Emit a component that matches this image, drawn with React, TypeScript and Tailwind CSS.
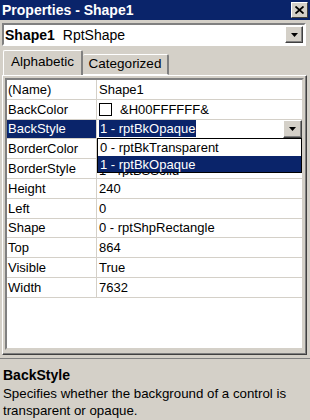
const ROWS = [
  { name: '(Name)', value: 'Shape1' },
  { name: 'BackColor', value: '&H00FFFFFF&', swatch: true },
  { name: 'BackStyle', value: '1 - rptBkOpaque', selected: true },
  { name: 'BorderColor', value: '' },
  { name: 'BorderStyle', value: '1 - rptBSSolid', hidden: true },
  { name: 'Height', value: '240' },
  { name: 'Left', value: '0' },
  { name: 'Shape', value: '0 - rptShpRectangle' },
  { name: 'Top', value: '864' },
  { name: 'Visible', value: 'True' },
  { name: 'Width', value: '7632' },
]

function DownArrow() {
  return (
    <svg width="7" height="4" viewBox="0 0 7 4">
      <path d="M0 0h7L3.5 4z" fill="#000" />
    </svg>
  )
}

function DropButton({ className = '' }: { className?: string }) {
  return (
    <div className={`flex items-center justify-center bg-[#d4d0c8] border border-t-white border-l-white border-r-[#404040] border-b-[#404040] shadow-[inset_-1px_-1px_0_#808080] ${className}`}>
      <DownArrow />
    </div>
  )
}

export default function App() {
  return (
    <div className="w-[310px] h-[420px] bg-[#d4d0c8] flex flex-col overflow-hidden font-['Liberation_Sans',Arial,sans-serif] text-black select-none">
      {/* Title bar */}
      <div className="h-[20px] bg-[#0a246a] flex items-center justify-between pl-[2px] pr-[2px]">
        <span className="text-white font-bold text-[14px] leading-none">Properties - Shape1</span>
        <div className="w-[17px] h-[16px] bg-[#d4d0c8] border border-t-white border-l-white border-r-[#404040] border-b-[#404040] flex items-center justify-center">
          <svg width="9" height="8" viewBox="0 0 9 8">
            <path d="M0.5 0.5l8 7M8.5 0.5l-8 7" stroke="#000" strokeWidth="1.8" />
          </svg>
        </div>
      </div>

      {/* Object combo */}
      <div className="mt-[3px] ml-[2px] mr-[4px] h-[23px] bg-white border-2 border-t-[#808080] border-l-[#808080] border-r-white border-b-white flex items-center">
        <div className="flex-1 pl-[1px] text-[14px] leading-none">
          <span className="font-bold">Shape1</span>
          <span className="ml-[8px]">RptShape</span>
        </div>
        <DropButton className="w-[18px] h-[17px] mr-[1px]" />
      </div>

      {/* Tabs */}
      <div className="mt-[4px] h-[25px] flex items-end pl-[3px] relative z-[1]">
        <div className="w-[80px] h-[25px] bg-[#d4d0c8] border-t border-l border-t-white border-l-white border-r-2 border-r-[#808080] rounded-t-[2px] flex items-center justify-center text-[13.5px] pb-[1px]">
          Alphabetic
        </div>
        <div className="w-[86px] h-[21px] bg-[#d4d0c8] border-t border-t-white border-r-2 border-r-[#808080] rounded-t-[2px] flex items-center justify-center text-[13.5px] border-b border-b-white">
          Categorized
        </div>
      </div>

      {/* Tab page */}
      <div className="ml-[2px] mr-[3px] h-[280px] border border-t-white border-l-white border-r-[#404040] border-b-[#404040] shadow-[inset_-1px_-1px_0_#808080] pt-[2px] pl-[2px] pr-[2px] pb-[4px] flex">
        <div className="flex-1 bg-white border-2 border-t-[#808080] border-l-[#808080] border-r-[#d4d0c8] border-b-[#d4d0c8] relative">
          {ROWS.map(row => (
            <div key={row.name} className="h-[19.8px] flex border-b border-b-[#d4d0c8] text-[13px] leading-none">
              <div className={`w-[90px] pl-[1px] flex items-center border-r border-r-[#d4d0c8] ${row.selected ? 'bg-[#0a246a] text-white' : ''}`}>
                {row.name}
              </div>
              <div className="flex-1 flex items-center pl-[2px]">
                {row.swatch && <span className="w-[13px] h-[13px] border border-black bg-white mr-[8px]" />}
                {row.selected ? (
                  <>
                    <span className="bg-[#0a246a] text-white px-[1px] py-[2px]">{row.value}</span>
                    <div className="flex-1" />
                    <DropButton className="w-[19px] h-[18px]" />
                  </>
                ) : row.hidden ? (
                  // only the lower edge of this value peeks out under the open list
                  <div className="self-end h-[4px] mb-[1px] overflow-hidden">
                    <span className="block -mt-[9px]">{row.value}</span>
                  </div>
                ) : (
                  <span>{row.value}</span>
                )}
              </div>
            </div>
          ))}

          {/* Open dropdown list */}
          <div className="absolute left-[90px] top-[58px] w-[205px] bg-white border border-black text-[13px] leading-none">
            <div className="h-[17px] flex items-center pl-[2px]">0 - rptBkTransparent</div>
            <div className="h-[16px] flex items-center pl-[2px] bg-[#0a246a] text-white">1 - rptBkOpaque</div>
          </div>
        </div>
      </div>

      {/* Description */}
      <div className="mt-[3px] flex-1 border-t border-t-[#808080] px-[3px] pt-[8px]">
        <div className="font-bold text-[14px] leading-[17px]">BackStyle</div>
        <div className="text-[13.3px] leading-[17px] mt-[1px]">
          Specifies whether the background of a control is transparent or opaque.
        </div>
      </div>
    </div>
  )
}
